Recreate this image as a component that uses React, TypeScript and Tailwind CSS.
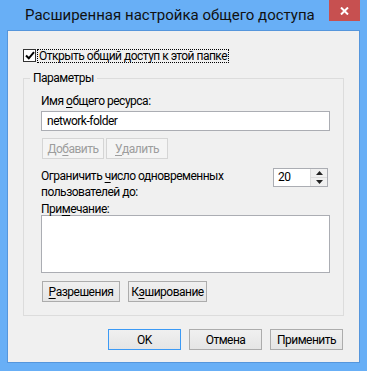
import React from 'react';

const font = { fontFamily: 'Roboto, "Noto Sans", sans-serif' };

function WinButton({
  children,
  width,
  disabled = false,
  isDefault = false,
}: {
  children: React.ReactNode;
  width: string;
  disabled?: boolean;
  isDefault?: boolean;
}) {
  const border = disabled
    ? 'border-[#d5d5d5] text-[#9d9d9d] bg-[#f4f4f4]'
    : isDefault
    ? 'border-[#3c9af5] text-black bg-gradient-to-b from-[#f0f0f0] to-[#e5e5e5]'
    : 'border-[#acacac] text-black bg-gradient-to-b from-[#f0f0f0] to-[#e5e5e5]';
  return (
    <div
      className={`${width} h-[21px] border ${border} flex items-center justify-center text-[12px] leading-none`}
    >
      {children}
    </div>
  );
}

export default function App() {
  return (
    <div
      className="w-[367px] h-[371px] bg-[#68aff6] flex flex-col text-black"
      style={font}
    >
      {/* title bar */}
      <div className="h-[30px] flex items-start">
        <div className="flex-1 pl-[25px] pt-[5px] text-[15px] leading-[20px] text-[#111]">
          Расширенная настройка общего доступа
        </div>
        <div className="w-[31px] h-[21px] mr-[7px] bg-[#c75050] flex items-center justify-center">
          <svg width="9" height="8" viewBox="0 0 9 8">
            <path d="M1 0.5 L8 7.5 M8 0.5 L1 7.5" stroke="white" strokeWidth="2" />
          </svg>
        </div>
      </div>

      {/* client area */}
      <div className="mx-[7px] border border-[#5596dc] bg-[#f0f0f0] flex flex-col pb-[12px] tracking-[-0.5px]">
        {/* checkbox */}
        <div className="mt-[18px] ml-[15px] h-[13px] flex items-center">
          <div className="w-[13px] h-[13px] border border-[#333] bg-white flex items-center justify-center">
            <svg width="10" height="9" viewBox="0 0 10 9">
              <path d="M1 4.5 L3.8 7.3 L9 1.2" stroke="black" strokeWidth="2" fill="none" />
            </svg>
          </div>
          <div className="ml-[1px] h-[14px] border border-dotted border-black px-[1px] text-[12px] leading-[12px] flex items-center">
            Открыть общий доступ к этой папке
          </div>
        </div>

        {/* group box */}
        <div className="relative mx-[15px] mt-[16px] h-[238px] border border-[#dcdcdc] pl-[17px] pr-[13px] pt-[14px]">
          <span className="absolute left-[6px] -top-[9px] bg-[#f0f0f0] px-[3px] text-[12px] leading-[16px]">
            Параметры
          </span>

          <div className="h-[16px] text-[12px] leading-[16px]">
            Имя <span className="underline underline-offset-2">о</span>бщего ресурса:
          </div>
          <div className="mt-[2px] h-[20px] border border-[#abadb3] bg-white pl-[5px] flex items-center text-[12px]">
            network-folder
          </div>

          <div className="mt-[7px] flex gap-[2px] pl-[1px]">
            <WinButton width="w-[62px]" disabled>
              До<span className="underline underline-offset-2">б</span>авить
            </WinButton>
            <WinButton width="w-[62px]" disabled>
              <span className="underline underline-offset-2">У</span>далить
            </WinButton>
          </div>

          <div className="mt-[9px] flex justify-between">
            <div className="text-[12px] leading-[16px]">
              Ограничить <span className="underline underline-offset-2">ч</span>исло одновременных
              <br />
              пользователей до:
            </div>
            <div className="mr-[2px] w-[55px] h-[19px] border border-[#abadb3] bg-white flex">
              <div className="flex-1 pl-[4px] text-[12px] leading-[17px]">20</div>
              <div className="w-[17px] flex flex-col border-l border-[#dcdcdc]">
                <div className="flex-1 flex items-center justify-center border-b border-[#dcdcdc] bg-[#f0f0f0]">
                  <svg width="7" height="4" viewBox="0 0 7 4">
                    <path d="M0 4 L3.5 0 L7 4 Z" fill="#222" />
                  </svg>
                </div>
                <div className="flex-1 flex items-center justify-center bg-[#f0f0f0]">
                  <svg width="7" height="4" viewBox="0 0 7 4">
                    <path d="M0 0 L3.5 4 L7 0 Z" fill="#222" />
                  </svg>
                </div>
              </div>
            </div>
          </div>

          <div className="mt-[1px] h-[14px] text-[12px] leading-[16px]">
            При<span className="underline underline-offset-2">м</span>ечание:
          </div>
          <div className="h-[58px] border border-[#abadb3] bg-white" />

          <div className="mt-[8px] flex gap-[8px] pl-[1px]">
            <WinButton width="w-[78px]">
              <span className="underline underline-offset-2">Р</span>азрешения
            </WinButton>
            <WinButton width="w-[79px]">
              К<span className="underline underline-offset-2">э</span>ширование
            </WinButton>
          </div>
        </div>

        {/* dialog buttons */}
        <div className="mt-[13px] flex justify-end gap-[8px] pr-[16px]">
          <WinButton width="w-[73px]" isDefault>
            OK
          </WinButton>
          <WinButton width="w-[73px]">Отмена</WinButton>
          <WinButton width="w-[73px]">Применить</WinButton>
        </div>
      </div>
    </div>
  );
}
